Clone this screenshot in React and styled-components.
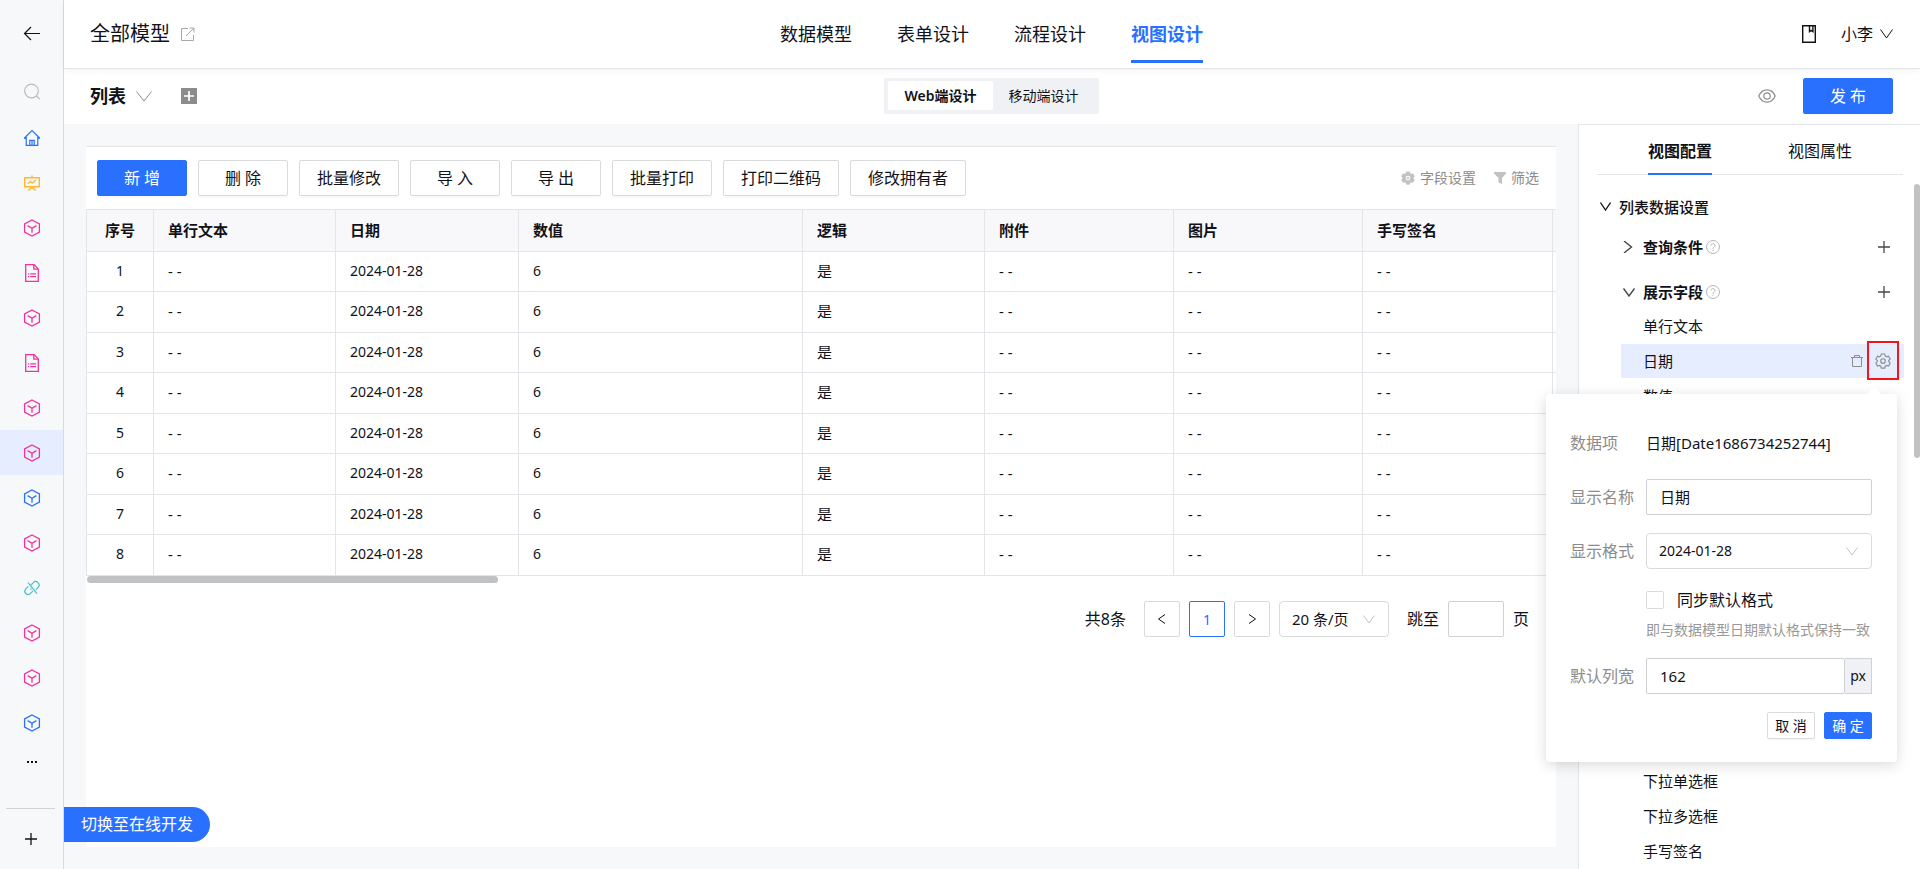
import React, { useState } from 'react';
import styled, { createGlobalStyle } from 'styled-components';

// Colors
const COLORS = {
  PRIMARY: '#2970ff',
  TEXT: '#111218',
  GRAY: '#8c8c8c',
  LIGHT_ICON: '#c0c2c6',
  BORDER: '#d9dadc',
  LINE: '#e4e5e9',
  PAGE: '#f7f8fa',
  HEAD: '#f8f8fb',
  FILL: '#f0f1f5',
  ACTIVE: '#e5edff',
  PINK: '#f5319d',
  YELLOW: '#ffb931',
  TEAL: '#3fc1c9',
  RED: '#f5141e',
};

const GlobalStyle = createGlobalStyle`
  *, *::before, *::after {
    box-sizing: border-box;
  }
  body {
    margin: 0;
    overflow: hidden;
    background-color: #fff;
    color: ${COLORS.TEXT};
    font-family: "Noto Sans", "Noto Sans CJK SC", sans-serif;
    font-size: 16px;
    line-height: 24px;
  }
  button, input, select {
    margin: 0;
    color: inherit;
    font-family: inherit;
  }
  button {
    padding: 0;
    border: none;
    background: none;
    cursor: pointer;
  }
  svg {
    display: block;
    flex: none;
  }
`;

// ---------- アイコン ----------

const Svg = ({ w = 16, h = w, box = `0 0 ${w} ${h}`, sw = 1, children }) => (
  <svg
    width={w}
    height={h}
    viewBox={box}
    fill="none"
    stroke="currentColor"
    strokeWidth={sw}
    aria-hidden="true"
  >
    {children}
  </svg>
);

const CubeIcon = () => (
  <Svg w={18} sw={1.3}>
    <path d="M9 1 16.4 5v8.2L9 17 1.6 13.200V5Z" />
    <path d="M4.600 6.600 9 9.200l4.400-2.600M9 9.200v4.600" />
  </Svg>
);

const DocIcon = () => (
  <Svg w={18} sw={1.3}>
    <path d="M2.700.7h8.500l4.100 4.200v12.400H2.700Z" />
    <path d="M10.800.9v4.300h4.400M5 9.800h1.200M7.200 9.800h5.800M5 12.600h1.200M7.200 12.600h5.800" />
  </Svg>
);

const HomeIcon = () => (
  <Svg w={18} sw={1.2}>
    <path d="M1.200 9.300 9 1.600l7.800 7.700M3.200 8v8.400h11.600V8M1.200 9.300h2M14.800 9.300h2" />
    <path d="M6.800 16.400v-5h4.400v5M9 12v4" />
  </Svg>
);

const BoardIcon = () => (
  <Svg w={18} sw={1.4}>
    <path d="M1.700 3.700h14.600v9H1.700ZM9 1.500v2M9 12.700v2M5.300 16.600 9 13.200l3.700 3.400" />
    <path d="m4.800 9.700 2.600-2.300 1.800 1.600 3.800-3" />
  </Svg>
);

const UnlinkIcon = () => (
  <Svg w={16} sw={1.2}>
    <path d="M7 5.200 9.300 2.700a3.300 3.300 0 0 1 4.800 4.600L11.700 9.800M9 10.900l-2.400 2.500a3.300 3.300 0 0 1-4.800-4.600l2.400-2.500M4 2.600l9 11M6.400 9.700l1-1" />
  </Svg>
);

const BackIcon = () => (
  <Svg w={18} sw={1.2}>
    <path d="M17 8.500H1.500M8 2 1.500 8.500 8 15" />
  </Svg>
);

const SearchIcon = () => (
  <Svg w={18} sw={1.2}>
    <circle cx="8.500" cy="8" r="6.800" />
    <path d="m13.500 13 3.400 3.400" />
  </Svg>
);

const PlusIcon = ({ size = 12, sw = 1.3 }) => (
  <Svg w={size} box="0 0 12 12" sw={sw}>
    <path d="M6 0v12M0 6h12" />
  </Svg>
);

const DownIcon = ({ w = 12, h = 8, sw }) => (
  <Svg w={w} h={h} sw={sw}>
    <path d={`M.5.5 ${w / 2} ${h - 1} ${w - 0.5}.5`} />
  </Svg>
);

const RightIcon = () => (
  <Svg w={12} sw={1.4}>
    <path d="M1 0l7.500 6L1 12" />
  </Svg>
);

const ArrowIcon = ({ flip }) => (
  <Svg w={10} h={12}>
    <path d={flip ? 'M2 1.500 8.500 6 2 10.500' : 'M8 1.500 1.500 6 8 10.500'} />
  </Svg>
);

const ShareIcon = () => (
  <Svg w={14}>
    <path d="M7 1.500H.5v12h12V8M5 9 13 1M8.500 1H13v4.500" />
  </Svg>
);

const BookIcon = () => (
  <Svg w={14} h={18} sw={1.4}>
    <path d="M.7.7h12.600v16.600H.7ZM7.500.7v6L9.200 5.400l1.700 1.300v-6" />
  </Svg>
);

const EyeIcon = () => (
  <Svg w={18} h={14} sw={1.2}>
    <path d="M.8 7C2.500 3 5.500.9 9 .9S15.500 3 17.200 7c-1.700 4-4.700 6.100-8.200 6.100S2.500 11 .8 7Z" />
    <circle cx="9" cy="7" r="3.200" />
  </Svg>
);

const TrashIcon = () => (
  <Svg w={12}>
    <path d="M0 2.500h12M3.500 2.500v-2h5v2M1.500 2.500v9h9v-9" />
  </Svg>
);

const HelpIcon = () => (
  <Svg w={14}>
    <circle cx="7" cy="7" r="6.500" />
    <path d="M5 5.600a2 2 0 1 1 3 1.700c-.7.400-1 .7-1 1.500M7 9.800v1.100" />
  </Svg>
);

const GearShape = 'M6.300 1h3.400l.5 2 1.300.8 2-.6 1.700 3-1.500 1.400v1L15.200 10l-1.700 3-2-.6-1.300.8-.5 1.900H6.300l-.5-1.900-1.300-.8-2 .6L.8 10l1.500-1.400v-1L.8 6.200l1.700-3 2 .6L5.800 3Z';

const GearIcon = () => (
  <Svg w={16} sw={1.1}>
    <path d={GearShape} />
    <circle cx="8" cy="8.100" r="2.300" />
  </Svg>
);

const GearFillIcon = () => (
  <Svg w={14} box="0 0 16 16">
    <path d={GearShape} fill="currentColor" />
    <circle cx="8" cy="8.100" r="2" stroke="#fff" strokeWidth="1.300" />
  </Svg>
);

const FilterIcon = () => (
  <Svg w={12}>
    <path d="M0 0h12v1.500L8 6v6L4.500 10.500V6L0 1.500Z" fill="currentColor" stroke="none" />
  </Svg>
);

// ---------- サイドバー ----------

const AppWrapper = styled.div`
  display: flex;
  position: relative;
  height: 100vh;
`;

const Sidebar = styled.nav`
  display: flex;
  flex-direction: column;
  flex: none;
  width: 64px;
  border-right: 1px solid #d8dade;
  background-color: ${COLORS.PAGE};
`;

const SideButton = styled.button`
  display: flex;
  align-items: center;
  justify-content: center;
  flex: none;
  height: ${(props) => props.$height || 45}px;
  color: ${(props) => props.$color || COLORS.TEXT};
  background-color: ${(props) => (props.$active ? COLORS.ACTIVE : 'transparent')};
`;

const SideFooter = styled.div`
  display: flex;
  margin: auto 8px 0 6px;
  border-top: 1px solid #d0d2d6;

  button {
    flex: 1;
  }
`;

const Dots = styled.span`
  display: flex;
  gap: 2px;

  i {
    width: 2px;
    height: 2px;
    background-color: ${COLORS.TEXT};
  }
`;

const SwitchPill = styled.button`
  position: absolute;
  left: 64px;
  bottom: 27px;
  z-index: 3;
  height: 35px;
  padding: 0 17px;
  border-radius: 0 18px 18px 0;
  background-color: ${COLORS.PRIMARY};
  color: #fff;
  font-size: 16px;
  line-height: 35px;
`;

// ---------- ヘッダー ----------

const Main = styled.main`
  display: flex;
  flex: 1;
  flex-direction: column;
  min-width: 0;
`;

const Bar = styled.header`
  display: grid;
  grid-template-columns: 1fr auto 1fr;
  align-items: center;
  flex: none;
  padding: 0 27px 0 26px;
`;

const Header = styled(Bar)`
  position: relative;
  z-index: 1;
  height: 69px;
  border-bottom: 1px solid ${COLORS.LINE};
  box-shadow: 0 2px 6px rgba(0, 0, 0, 0.05);
`;

const SubHeader = styled(Bar)`
  height: 55px;
  padding-bottom: 1px;
`;

const BarSide = styled.div`
  display: flex;
  align-items: center;
  justify-content: ${(props) => (props.$end ? 'flex-end' : 'flex-start')};
  gap: ${(props) => props.$gap}px;
`;

const Title = styled.h1`
  margin: 0;
  font-size: 20px;
  font-weight: 400;
  line-height: 24px;
`;

const ViewTitle = styled.h2`
  margin: 0;
  font-size: 18px;
  font-weight: 700;
`;

const IconButton = styled.button`
  display: flex;
  align-items: center;
  color: ${(props) => props.$color || COLORS.TEXT};
`;

const AddViewButton = styled.button`
  display: flex;
  align-items: center;
  justify-content: center;
  width: 16px;
  height: 16px;
  margin-left: 19px;
  background-color: ${COLORS.GRAY};
  color: #fff;
`;

const MainNav = styled.nav`
  display: flex;
  gap: 45px;
`;

const NavLink = styled.a`
  height: 58px;
  border-bottom: 3px solid ${(props) => (props.$active ? COLORS.PRIMARY : 'transparent')};
  color: ${(props) => (props.$active ? COLORS.PRIMARY : COLORS.TEXT)};
  font-size: 18px;
  font-weight: ${(props) => (props.$active ? 700 : 400)};
  line-height: 58px;
  text-decoration: none;
`;

const UserButton = styled.button`
  display: flex;
  align-items: center;
  gap: 7px;
  font-size: 16px;
  line-height: 24px;
`;

const Segment = styled.div`
  display: flex;
  height: 36px;
  padding: 3px 4px 4px;
  border-radius: 2px;
  background-color: ${COLORS.FILL};
`;

const SegmentButton = styled.button`
  padding: 0 16px;
  border-radius: 2px;
  background-color: ${(props) => (props.$active ? '#fff' : 'transparent')};
  font-size: 14px;
  font-weight: ${(props) => (props.$active ? 600 : 400)};
  line-height: 29px;
`;

const Button = styled.button`
  min-width: ${(props) => (props.$small ? 48 : 90)}px;
  height: ${(props) => (props.$small ? 27 : 36)}px;
  padding: 0 ${(props) => (props.$small ? 7 : 17)}px;
  border: 1px solid ${(props) => (props.$primary ? COLORS.PRIMARY : COLORS.BORDER)};
  border-radius: 2px;
  background-color: ${(props) => (props.$primary ? COLORS.PRIMARY : '#fff')};
  box-shadow: 0 2px 0 rgba(0, 0, 0, 0.02);
  color: ${(props) => (props.$primary ? '#fff' : COLORS.TEXT)};
  font-size: ${(props) => (props.$small ? 14 : 16)}px;
  line-height: 24px;
`;

// ---------- 一覧 ----------

const Body = styled.div`
  display: flex;
  flex: 1;
  min-height: 0;
`;

const Canvas = styled.section`
  display: flex;
  flex: 1;
  min-width: 0;
  padding: 22px;
  background-color: ${COLORS.PAGE};
`;

const Sheet = styled.div`
  flex: 1;
  min-width: 0;
  border-top: 1px solid ${COLORS.LINE};
  background-color: #fff;
`;

const Toolbar = styled.div`
  display: flex;
  align-items: center;
  gap: 11px;
  padding: 13px 17px 13px 11px;
`;

const ToolLinks = styled.div`
  display: flex;
  gap: 18px;
  margin-left: auto;
`;

const ToolLink = styled.button`
  display: flex;
  align-items: center;
  gap: 5px;
  color: ${COLORS.GRAY};
  font-size: 14px;
  line-height: 20px;

  svg {
    color: ${COLORS.LIGHT_ICON};
  }
`;

const TableWrapper = styled.div`
  overflow: hidden;
  border-top: 1px solid ${COLORS.LINE};
  border-left: 1px solid ${COLORS.LINE};
`;

const Table = styled.table`
  width: 1648px;
  table-layout: fixed;
  border-collapse: separate;
  border-spacing: 0;

  th, td {
    height: 40px;
    padding: 0 14px 2px;
    border-right: 1px solid ${COLORS.LINE};
    border-bottom: 1px solid ${COLORS.LINE};
    font-size: 15px;
    line-height: 20px;
    text-align: left;
  }
  th {
    height: 42px;
    background-color: ${COLORS.HEAD};
    font-weight: 600;
  }
  tbody tr:nth-child(even) td {
    height: 41px;
  }
  th:first-child, td:first-child {
    text-align: center;
  }
`;

const NumberCell = styled.td`
  &&& {
    font-size: 14px;
  }
`;

const ScrollTrack = styled.div`
  height: 7px;
  padding-left: 1px;
`;

const ScrollThumb = styled.div`
  width: 28%;
  height: 7px;
  border-radius: 4px;
  background-color: #c0c2c4;
`;

const Pagination = styled.div`
  display: flex;
  align-items: center;
  justify-content: flex-end;
  gap: 9px;
  margin-top: 18px;
  padding-right: 27px;
`;

const Total = styled.span`
  margin-right: 9px;
`;

const PageButton = styled.button`
  display: flex;
  align-items: center;
  justify-content: center;
  width: 36px;
  height: 36px;
  border: 1px solid ${(props) => (props.$active ? COLORS.PRIMARY : COLORS.BORDER)};
  border-radius: 2px;
  color: ${(props) => (props.$active ? COLORS.PRIMARY : COLORS.TEXT)};
  font-size: 14px;
`;

const JumpLabel = styled.label`
  display: flex;
  align-items: center;
  gap: 9px;
  margin-left: 9px;
`;

const Input = styled.input`
  width: ${(props) => props.$width || '100%'};
  min-width: 0;
  height: 36px;
  padding: 0 13px 1px;
  border: 1px solid #cfd1d5;
  border-radius: 2px;
  background-color: #fff;
  font-size: 15px;
`;

const SelectWrapper = styled.div`
  position: relative;
  width: ${(props) => props.$width || '100%'};
  color: ${COLORS.LIGHT_ICON};

  svg {
    position: absolute;
    top: 14px;
    right: 14px;
    pointer-events: none;
  }
`;

const Select = styled.select`
  width: 100%;
  height: 36px;
  padding: 0 12px 1px;
  border: 1px solid ${COLORS.BORDER};
  border-radius: 4px;
  appearance: none;
  background-color: #fff;
  color: ${COLORS.TEXT};
  font-size: ${(props) => props.$size || 15}px;
`;

// ---------- 設定パネル ----------

const ConfigPanel = styled.aside`
  display: flex;
  flex-direction: column;
  flex: none;
  position: relative;
  width: 342px;
  border-top: 1px solid ${COLORS.LINE};
  border-left: 1px solid ${COLORS.LINE};
  background-color: #fff;
`;

const Tabs = styled.div`
  display: flex;
  flex: none;
  justify-content: center;
  gap: 76px;
  height: 50px;
  margin: 0 17px 0 18px;
  border-bottom: 1px solid ${COLORS.LINE};
`;

const Tab = styled.button`
  position: relative;
  padding-top: 2px;
  font-size: 16px;
  font-weight: ${(props) => (props.$active ? 600 : 400)};
  line-height: 24px;

  &::after {
    content: "";
    position: absolute;
    right: 0;
    bottom: -1px;
    left: 0;
    height: 2px;
    background-color: ${(props) => (props.$active ? COLORS.PRIMARY : 'transparent')};
  }
`;

const ConfigScroll = styled.div`
  flex: 1;
  position: relative;
  min-height: 0;
  margin-top: 9px;
  padding: 5px 16px 0 21px;
  overflow: hidden;
`;

const VerticalThumb = styled.div`
  position: absolute;
  top: 0;
  right: 0;
  width: 6px;
  height: 40%;
  border-radius: 3px;
  background-color: #c0c2c4;
`;

const GroupHead = styled.button`
  display: flex;
  align-items: center;
  gap: 8px;
  height: 34px;
  font-size: 15px;
  font-weight: 500;
`;

const SubGroups = styled.div`
  display: flex;
  flex-direction: column;
  gap: 11px;
  margin: 7px 0 0 21px;
`;

const SubHead = styled.div`
  display: flex;
  align-items: center;
  height: 34px;
  padding: 0 14px 0 2px;
  font-size: 15px;
  font-weight: 600;

  span {
    margin: 0 3px 0 8px;
  }
  button {
    margin-left: auto;
  }
  svg {
    color: #45474d;
  }
  span + svg {
    color: #b4b6ba;
  }
`;

const FieldList = styled.ul`
  display: flex;
  flex-direction: column;
  gap: 1px;
  margin: 0;
  padding: 0;
  list-style: none;
`;

const Field = styled.li`
  display: flex;
  align-items: center;
  flex: none;
  gap: 12px;
  height: 34px;
  padding: 0 13px 1px 22px;
  background-color: ${(props) => (props.$active ? COLORS.ACTIVE : 'transparent')};
  font-size: 15px;

  button:first-of-type {
    margin-left: auto;
  }
`;

const MarkedButton = styled(IconButton)`
  position: relative;

  &::after {
    content: "";
    position: absolute;
    inset: -12px -8px -11px;
    border: 2px solid ${COLORS.RED};
  }
`;

// ---------- ポップオーバー ----------

const Popover = styled.form`
  display: flex;
  flex-direction: column;
  gap: 18px;
  position: absolute;
  top: 269px;
  right: 23px;
  z-index: 2;
  width: 351px;
  padding: 31px 25px 23px 24px;
  border-radius: 4px;
  background-color: #fff;
  box-shadow: 0 3px 14px rgba(0, 0, 0, 0.15);

  &::before {
    content: "";
    position: absolute;
    top: -5px;
    right: 18px;
    width: 10px;
    height: 10px;
    background-color: #fff;
    transform: rotate(45deg);
  }
`;

const FormRow = styled.div`
  display: grid;
  grid-template-columns: 76px 1fr;
  align-items: center;
  min-height: 36px;
`;

const Label = styled.label`
  color: ${COLORS.GRAY};
`;

const Value = styled.output`
  font-size: 15px;
`;

const SyncBlock = styled.div`
  margin-left: 76px;
`;

const CheckLabel = styled.label`
  display: flex;
  align-items: center;
  gap: 13px;
  height: 26px;
`;

const Checkbox = styled.input`
  width: 18px;
  height: 18px;
  border: 1px solid ${COLORS.BORDER};
  border-radius: 2px;
  appearance: none;
  background-color: #fff;

  &:checked {
    background-color: ${COLORS.PRIMARY};
  }
`;

const Hint = styled.p`
  margin: 7px 0 0;
  color: #999;
  font-size: 14px;
  line-height: 20px;
  white-space: nowrap;
`;

const InputGroup = styled.div`
  display: flex;
`;

const Addon = styled.span`
  flex: none;
  width: 27px;
  border: 1px solid #cfd1d5;
  border-left: none;
  background-color: ${COLORS.FILL};
  font-size: 14px;
  line-height: 34px;
  text-align: center;
`;

const PopoverFooter = styled.div`
  display: flex;
  justify-content: flex-end;
  gap: 9px;
`;

// ---------- データ ----------

const SIDE_ITEMS = [
  { icon: HomeIcon, color: COLORS.PRIMARY, name: '首页' },
  { icon: BoardIcon, color: COLORS.YELLOW, name: '报表' },
  { icon: CubeIcon, color: COLORS.PINK, name: '模型' },
  { icon: DocIcon, color: COLORS.PINK, name: '文档' },
  { icon: CubeIcon, color: COLORS.PINK, name: '模型' },
  { icon: DocIcon, color: COLORS.PINK, name: '文档' },
  { icon: CubeIcon, color: COLORS.PINK, name: '模型' },
  { icon: CubeIcon, color: COLORS.PINK, name: '模型', active: true },
  { icon: CubeIcon, color: COLORS.PRIMARY, name: '模型' },
  { icon: CubeIcon, color: COLORS.PINK, name: '模型' },
  { icon: UnlinkIcon, color: COLORS.TEAL, name: '链接' },
  { icon: CubeIcon, color: COLORS.PINK, name: '模型' },
  { icon: CubeIcon, color: COLORS.PINK, name: '模型' },
  { icon: CubeIcon, color: COLORS.PRIMARY, name: '模型' },
];

const NAV_ITEMS = ['数据模型', '表单设计', '流程设计', '视图设计'];

const ACTIONS = ['新 增', '删 除', '批量修改', '导 入', '导 出', '批量打印', '打印二维码', '修改拥有者'];

const COLUMNS = [
  { title: '序号', width: 67 },
  { title: '单行文本', width: 182 },
  { title: '日期', width: 183 },
  { title: '数值', width: 284 },
  { title: '逻辑', width: 182 },
  { title: '附件', width: 189 },
  { title: '图片', width: 189 },
  { title: '手写签名', width: 190 },
  { title: '', width: 182 },
];

const ROWS = [1, 2, 3, 4, 5, 6, 7, 8];

const FIELDS = [
  '单行文本', '日期', '数值', '逻辑', '附件', '图片', '地址', '多行文本',
  '人员单选', '人员多选', '部门单选', '单选框', '多选框',
  '下拉单选框', '下拉多选框', '手写签名',
];

const DataTable = () => (
  <TableWrapper>
    <Table>
      <colgroup>
        {COLUMNS.map(({ title, width }) => (
          <col key={title} width={width} />
        ))}
      </colgroup>
      <thead>
        <tr>
          {COLUMNS.map(({ title }) => (
            <th key={title} scope="col">{title}</th>
          ))}
        </tr>
      </thead>
      <tbody>
        {ROWS.map((num) => (
          <tr key={num}>
            <NumberCell>{num}</NumberCell>
            <td>- -</td>
            <NumberCell>2024-01-28</NumberCell>
            <NumberCell>6</NumberCell>
            <td>是</td>
            <td>- -</td>
            <td>- -</td>
            <td>- -</td>
            <td />
          </tr>
        ))}
      </tbody>
    </Table>
  </TableWrapper>
);

const FieldPopover = () => {
  const [name, setName] = useState('日期');
  const [width, setWidth] = useState('162');

  return (
    <Popover onSubmit={(e) => e.preventDefault()}>
      <FormRow>
        <Label htmlFor="field-key">数据项</Label>
        <Value id="field-key">日期[Date1686734252744]</Value>
      </FormRow>
      <FormRow>
        <Label htmlFor="field-name">显示名称</Label>
        <Input id="field-name" value={name} onChange={(e) => setName(e.target.value)} />
      </FormRow>
      <FormRow>
        <Label htmlFor="field-format">显示格式</Label>
        <SelectWrapper>
          <Select id="field-format" $size={14}>
            <option>2024-01-28</option>
          </Select>
          <DownIcon w={12} h={9} />
        </SelectWrapper>
      </FormRow>
      <SyncBlock>
        <CheckLabel>
          <Checkbox type="checkbox" />
          同步默认格式
        </CheckLabel>
        <Hint>即与数据模型日期默认格式保持一致</Hint>
      </SyncBlock>
      <FormRow>
        <Label htmlFor="field-width">默认列宽</Label>
        <InputGroup>
          <Input id="field-width" value={width} onChange={(e) => setWidth(e.target.value)} />
          <Addon>px</Addon>
        </InputGroup>
      </FormRow>
      <PopoverFooter>
        <Button type="button" $small>取 消</Button>
        <Button type="submit" $small $primary>确 定</Button>
      </PopoverFooter>
    </Popover>
  );
};

const Config = () => (
  <ConfigPanel>
    <Tabs>
      <Tab type="button" $active>视图配置</Tab>
      <Tab type="button">视图属性</Tab>
    </Tabs>
    <ConfigScroll>
      <GroupHead type="button">
        <DownIcon w={11} h={9} sw={1.3} />
        列表数据设置
      </GroupHead>
      <SubGroups>
        <SubHead>
          <RightIcon />
          <span>查询条件</span>
          <HelpIcon />
          <IconButton type="button" aria-label="添加查询条件"><PlusIcon /></IconButton>
        </SubHead>
        <div>
          <SubHead>
            <DownIcon w={12} h={9} sw={1.4} />
            <span>展示字段</span>
            <HelpIcon />
            <IconButton type="button" aria-label="添加展示字段"><PlusIcon /></IconButton>
          </SubHead>
          <FieldList>
            {FIELDS.map((field) => (
              <Field key={field} $active={field === '日期'}>
                {field}
                {field === '日期' && (
                  <>
                    <IconButton type="button" $color={COLORS.GRAY} aria-label="删除">
                      <TrashIcon />
                    </IconButton>
                    <MarkedButton type="button" $color={COLORS.GRAY} aria-label="设置">
                      <GearIcon />
                    </MarkedButton>
                  </>
                )}
              </Field>
            ))}
          </FieldList>
        </div>
      </SubGroups>
      <VerticalThumb />
    </ConfigScroll>
    <FieldPopover />
  </ConfigPanel>
);

export default function App() {
  return (
    <AppWrapper>
      <GlobalStyle />
      <Sidebar>
        <SideButton type="button" $height={68} aria-label="返回"><BackIcon /></SideButton>
        <SideButton type="button" $height={47} $color="#b9bbbf" aria-label="搜索"><SearchIcon /></SideButton>
        {SIDE_ITEMS.map(({ icon: Icon, color, name, active }, i) => (
          <SideButton type="button" key={i} $color={color} $active={active} aria-label={name}>
            <Icon />
          </SideButton>
        ))}
        <SideButton type="button" $height={33} aria-label="更多">
          <Dots><i /><i /><i /></Dots>
        </SideButton>
        <SideFooter>
          <SideButton type="button" $height={60} aria-label="新建"><PlusIcon /></SideButton>
        </SideFooter>
      </Sidebar>
      <Main>
        <Header>
          <BarSide $gap={11}>
            <Title>全部模型</Title>
            <IconButton type="button" $color="#a6a8ac" aria-label="打开"><ShareIcon /></IconButton>
          </BarSide>
          <MainNav>
            {NAV_ITEMS.map((item) => (
              <NavLink key={item} href="#" $active={item === '视图设计'}>{item}</NavLink>
            ))}
          </MainNav>
          <BarSide $end $gap={25}>
            <IconButton type="button" aria-label="手册"><BookIcon /></IconButton>
            <UserButton type="button">
              小李
              <DownIcon w={13} h={10} />
            </UserButton>
          </BarSide>
        </Header>
        <SubHeader as="div">
          <BarSide $gap={10}>
            <ViewTitle>列表</ViewTitle>
            <IconButton type="button" $color={COLORS.GRAY} aria-label="切换视图">
              <DownIcon w={16} h={11} />
            </IconButton>
            <AddViewButton type="button" aria-label="新建视图"><PlusIcon size={10} sw={2} /></AddViewButton>
          </BarSide>
          <Segment>
            <SegmentButton type="button" $active>Web端设计</SegmentButton>
            <SegmentButton type="button">移动端设计</SegmentButton>
          </Segment>
          <BarSide $end $gap={27}>
            <IconButton type="button" $color={COLORS.GRAY} aria-label="预览"><EyeIcon /></IconButton>
            <Button type="button" $primary>发 布</Button>
          </BarSide>
        </SubHeader>
        <Body>
          <Canvas>
            <Sheet>
              <Toolbar>
                {ACTIONS.map((action, i) => (
                  <Button type="button" key={action} $primary={i === 0}>{action}</Button>
                ))}
                <ToolLinks>
                  <ToolLink type="button"><GearFillIcon />字段设置</ToolLink>
                  <ToolLink type="button"><FilterIcon />筛选</ToolLink>
                </ToolLinks>
              </Toolbar>
              <DataTable />
              <ScrollTrack><ScrollThumb /></ScrollTrack>
              <Pagination>
                <Total>共8条</Total>
                <PageButton type="button" aria-label="上一页"><ArrowIcon /></PageButton>
                <PageButton type="button" $active>1</PageButton>
                <PageButton type="button" aria-label="下一页"><ArrowIcon flip /></PageButton>
                <SelectWrapper $width="110px">
                  <Select aria-label="每页条数">
                    <option>20 条/页</option>
                  </Select>
                  <DownIcon w={12} h={9} />
                </SelectWrapper>
                <JumpLabel>
                  跳至
                  <Input $width="56px" />
                  页
                </JumpLabel>
              </Pagination>
            </Sheet>
          </Canvas>
          <Config />
        </Body>
      </Main>
      <SwitchPill type="button">切换至在线开发</SwitchPill>
    </AppWrapper>
  );
}
